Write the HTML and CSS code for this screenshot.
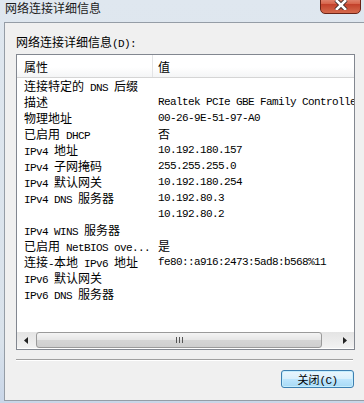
FILE: index.html
```html
<!DOCTYPE html>
<html lang="zh-CN">
<head>
    <meta charset="UTF-8">
    <meta name="viewport" content="width=device-width, initial-scale=1.0">
    <title>网络连接详细信息</title>
    <link rel="stylesheet" href="styles.css">
</head>
<body>
    <div class="titlebar">
        <div class="title">网络连接详细信息</div>
        <div class="close">
            <svg width="14" height="10" viewBox="0 0 14 10">
                <path d="M2 0 L12 10 M12 0 L2 10" stroke="#3b2a26" stroke-width="4.4"/>
                <path d="M2 0 L12 10 M12 0 L2 10" stroke="#fff" stroke-width="2.6"/>
            </svg>
        </div>
    </div>
    <div class="client">
        <div class="label">网络连接详细信息<span class="m">(D):</span></div>
        <div class="list">
            <div class="head">
                <div class="c1">属性</div>
                <div class="c2">值</div>
            </div>
            <div class="rows">
                <div class="row"><div class="c1">连接特定的<span class="m"> DNS </span>后缀</div><div class="c2"></div></div>
                <div class="row"><div class="c1">描述</div><div class="c2 m">Realtek PCIe GBE Family Controller</div></div>
                <div class="row"><div class="c1">物理地址</div><div class="c2 m">00-26-9E-51-97-A0</div></div>
                <div class="row"><div class="c1">已启用<span class="m"> DHCP</span></div><div class="c2">否</div></div>
                <div class="row"><div class="c1"><span class="m">IPv4 </span>地址</div><div class="c2 m">10.192.180.157</div></div>
                <div class="row"><div class="c1"><span class="m">IPv4 </span>子网掩码</div><div class="c2 m">255.255.255.0</div></div>
                <div class="row"><div class="c1"><span class="m">IPv4 </span>默认网关</div><div class="c2 m">10.192.180.254</div></div>
                <div class="row"><div class="c1"><span class="m">IPv4 DNS </span>服务器</div><div class="c2 m">10.192.80.3</div></div>
                <div class="row"><div class="c1"></div><div class="c2 m">10.192.80.2</div></div>
                <div class="row"><div class="c1"><span class="m">IPv4 WINS </span>服务器</div><div class="c2"></div></div>
                <div class="row"><div class="c1">已启用<span class="m"> NetBIOS ove...</span></div><div class="c2">是</div></div>
                <div class="row"><div class="c1">连接<span class="m">-</span>本地<span class="m"> IPv6 </span>地址</div><div class="c2 m">fe80::a916:2473:5ad8:b568%11</div></div>
                <div class="row"><div class="c1"><span class="m">IPv6 </span>默认网关</div><div class="c2"></div></div>
                <div class="row"><div class="c1"><span class="m">IPv6 DNS </span>服务器</div><div class="c2"></div></div>
            </div>
            <div class="hscroll">
                <div class="arrow">
                    <svg width="4" height="7" viewBox="0 0 4 7"><polygon points="4,0 4,7 0,3.5" fill="#222"/></svg>
                </div>
                <div class="thumb"><span class="grip"></span></div>
                <div class="track"></div>
                <div class="arrow">
                    <svg width="4" height="7" viewBox="0 0 4 7"><polygon points="0,0 0,7 4,3.5" fill="#222"/></svg>
                </div>
            </div>
        </div>
        <div class="sep"></div>
        <div class="buttons">
            <button class="btn">关闭<span class="m">(C)</span></button>
        </div>
    </div>
</body>
</html>
```

FILE: styles.css
```css
html, body {
    margin: 0;
    padding: 0;
}
body {
    width: 364px;
    height: 403px;
    overflow: hidden;
    background: linear-gradient(#dfe7ef, #d9e2eb 85%, #c9d6e8);
    font-family: "Noto Sans CJK SC", sans-serif;
    font-size: 12px;
    color: #000;
}
/* SimSun 的西文是半角等宽，约 6px 一个字 */
.m {
    font-family: "Liberation Mono", monospace;
    font-size: 11px;
    letter-spacing: -0.6px;
}
.titlebar {
    position: relative;
    height: 22px;
}
.title {
    padding-left: 5px;
    line-height: 16px;
    color: #1b1b1b;
}
.close {
    position: absolute;
    left: 320px;
    top: -6px;
    width: 41px;
    height: 20px;
    box-sizing: border-box;
    border: 1px solid #6a2417;
    border-radius: 0 0 5px 5px;
    background: linear-gradient(#e9a795, #d7634a 50%, #c2402a 51%, #d56a4c);
}
.close svg {
    display: block;
    margin: 5px auto 0;
}
.client {
    margin-left: 4px;
    height: 377px;
    border: 1px solid #959da6;
    border-right: none;
    background: #f0f0f0;
    padding-left: 11px;
}
.label {
    margin-top: 11px;
    line-height: 16px;
}
.list {
    margin-top: 2px;
    width: 339px;
    height: 296px;
    box-sizing: border-box;
    border: 1px solid #828790;
    background: #fff;
    display: flex;
    flex-direction: column;
    overflow: hidden;
}
.head {
    display: flex;
    flex: none;
    height: 22px;
    line-height: 23px;
    border-bottom: 1px solid #d5d5d5;
    background: linear-gradient(#fff, #fff 55%, #f4f5f6);
}
.c1 {
    flex: none;
    width: 136px;
    box-sizing: border-box;
    padding-left: 7px;
    white-space: nowrap;
}
.head .c1 {
    border-right: 1px solid #e3e4e6;
}
.c2 {
    flex: 1;
    padding-left: 5px;
    white-space: nowrap;
    overflow: hidden;
}
.rows {
    flex: 1;
}
.row {
    display: flex;
    height: 16px;
    line-height: 16px;
}
.hscroll {
    flex: none;
    display: flex;
    height: 16px;
    margin-bottom: 1px;
    background: linear-gradient(#e4e4e4, #f2f2f2);
}
.arrow {
    width: 18px;
    display: flex;
    align-items: center;
    justify-content: center;
}
.thumb {
    width: 286px;
    margin-left: 1px;
    box-sizing: border-box;
    border: 1px solid #9a9a9a;
    border-radius: 3px;
    background: linear-gradient(#f4f4f4, #e6e6e6 50%, #d5d5d5 51%, #cfcfcf);
    display: flex;
    align-items: center;
    justify-content: center;
}
.grip {
    width: 5px;
    height: 6px;
    border-left: 1px solid #555;
    border-right: 1px solid #555;
    background: linear-gradient(90deg, transparent 2px, #555 2px, #555 3px, transparent 3px);
}
.track {
    flex: 1;
}
.sep {
    margin-top: 9px;
    width: 337px;
    border-top: 1px solid #a0a0a0;
    border-bottom: 1px solid #fff;
}
.buttons {
    display: flex;
    justify-content: flex-end;
    width: 338px;
    margin-top: 9px;
}
.btn {
    width: 73px;
    height: 18px;
    box-sizing: border-box;
    padding: 0;
    border: 1px solid #3c7fb1;
    border-radius: 3px;
    background: linear-gradient(#eaf6fd, #d9f0fc 50%, #bee6fd 51%, #a7d9f5);
    box-shadow: inset 0 0 0 1px #c5eefd;
    font-family: "Noto Sans CJK SC", sans-serif;
    font-size: 11px;
    line-height: 16px;
    color: #000;
}
```
